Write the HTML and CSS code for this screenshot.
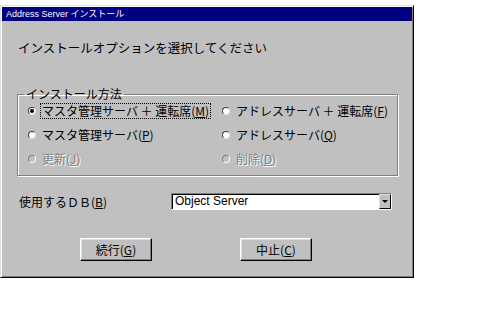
FILE: index.html
```html
<!DOCTYPE html>
<html lang="ja">
<head>
    <meta charset="UTF-8">
    <meta name="viewport" content="width=device-width, initial-scale=1.0">
    <title>Address Server インストール</title>
    <link rel="stylesheet" href="styles.css">
</head>
<body>
    <div class="window">
        <div class="titlebar">Address Server インストール</div>
        <div class="content">
            <p class="prompt">インストールオプションを選択してください</p>

            <fieldset class="group">
                <legend>インストール方法</legend>
                <div class="options">
                    <label class="option checked"><span class="radio"></span><span class="text focus">マスタ管理サーバ ＋ 運転席(<u>M</u>)</span></label>
                    <label class="option"><span class="radio"></span><span class="text">アドレスサーバ ＋ 運転席(<u>F</u>)</span></label>
                    <label class="option"><span class="radio"></span><span class="text">マスタ管理サーバ(<u>P</u>)</span></label>
                    <label class="option"><span class="radio"></span><span class="text">アドレスサーバ(<u>Q</u>)</span></label>
                    <label class="option disabled"><span class="radio"></span><span class="text">更新(<u>J</u>)</span></label>
                    <label class="option disabled"><span class="radio"></span><span class="text">削除(<u>D</u>)</span></label>
                </div>
            </fieldset>

            <div class="db-row">
                <span class="db-label">使用するＤＢ(<u>B</u>)</span>
                <div class="combo">
                    <span class="combo-value">Object Server</span>
                    <span class="combo-button"><span class="arrow"></span></span>
                </div>
            </div>

            <div class="buttons">
                <button class="btn">続行(<u>G</u>)</button>
                <button class="btn">中止(<u>C</u>)</button>
            </div>
        </div>
    </div>
</body>
</html>
```

FILE: styles.css
```css
body {
    margin: 0;
    background: #fff;
    font-family: "Noto Sans CJK JP", "Liberation Sans", sans-serif;
    font-size: 12px;
    color: #000;
}
.window {
    box-sizing: border-box;
    width: 414px;
    height: 273px;
    margin-top: 5px;
    background: #c0c0c0;
    border: 1px solid;
    border-color: #dfdfdf #000 #000 #dfdfdf;
    box-shadow: inset 1px 1px 0 #fff, inset -1px -1px 0 #808080;
    padding: 1px;
}
.titlebar {
    height: 14px;
    line-height: 14px;
    background: #000080;
    color: #fff;
    font-family: "Liberation Sans", "Noto Sans CJK JP", sans-serif;
    font-size: 9px;
    padding-left: 4px;
}
.content {
    padding: 0 14px;
}
.prompt {
    margin: 19px 0 0 2px;
    line-height: 16px;
    font-size: 12.5px;
}
u {
    text-decoration: underline;
    text-underline-offset: 1px;
}
/* group box */
.group {
    margin: 31px 0 0 1px;
    width: 381px;
    box-sizing: border-box;
    padding: 2px 0 8px 0;
    border: 1px solid #808080;
    box-shadow: 1px 1px 0 #fff, inset 1px 1px 0 #fff;
}
.group legend {
    margin-left: 6px;
    padding: 0 2px;
    line-height: 14px;
}
.options {
    display: grid;
    grid-template-columns: 194px 1fr;
    row-gap: 8px;
    padding-left: 10px;
}
.option {
    display: flex;
    align-items: center;
    height: 16px;
    gap: 4px;
    white-space: nowrap;
}
.radio {
    position: relative;
    box-sizing: border-box;
    width: 8px;
    height: 8px;
    border-radius: 50%;
    background: #fff;
    border: 1px solid;
    border-color: #404040 #dfdfdf #dfdfdf #404040;
}
.option.checked .radio::after {
    content: "";
    position: absolute;
    left: 1px;
    top: 1px;
    width: 4px;
    height: 4px;
    border-radius: 50%;
    background: #000;
}
.option.disabled .radio {
    background: #c0c0c0;
    border-color: #808080 #fff #fff #808080;
}
.option.disabled .text {
    color: #808080;
    text-shadow: 1px 1px 0 #fff;
}
.text {
    line-height: 14px;
    padding: 0 1px;
    border: 1px solid transparent;
}
.text.focus {
    border: 1px dotted #000;
}
/* database row */
.db-row {
    display: flex;
    align-items: center;
    margin-top: 17px;
    height: 17px;
}
.db-label {
    width: 152px;
    margin-left: 3px;
}
.combo {
    box-sizing: border-box;
    display: flex;
    width: 221px;
    height: 17px;
    background: #fff;
    border: 1px solid;
    border-color: #808080 #fff #fff #808080;
    box-shadow: inset 1px 1px 0 #000;
}
.combo-value {
    flex: 1;
    padding: 0 0 0 3px;
    line-height: 15px;
    font-family: "Liberation Sans", sans-serif;
    font-size: 12px;
}
.combo-button {
    box-sizing: border-box;
    width: 12px;
    height: 15px;
    background: #c0c0c0;
    border: 1px solid;
    border-color: #dfdfdf #000 #000 #dfdfdf;
    display: flex;
    align-items: center;
    justify-content: center;
}
.arrow {
    width: 0;
    height: 0;
    border-left: 3px solid transparent;
    border-right: 3px solid transparent;
    border-top: 3px solid #000;
}
/* buttons */
.buttons {
    display: flex;
    gap: 88px;
    margin-top: 28px;
    padding-left: 64px;
}
.btn {
    box-sizing: border-box;
    width: 72px;
    height: 23px;
    padding: 0;
    background: #c0c0c0;
    font-family: "Noto Sans CJK JP", sans-serif;
    font-size: 12px;
    color: #000;
    border: 1px solid;
    border-color: #fff #000 #000 #fff;
    box-shadow: inset -1px -1px 0 #808080, inset 1px 1px 0 #dfdfdf;
    cursor: pointer;
}
```
